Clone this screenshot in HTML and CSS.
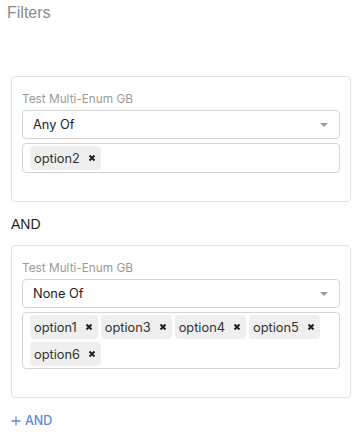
FILE: index.html
```html
<!DOCTYPE html>
<html>
<head>
<meta charset="utf-8">
<link rel="stylesheet" href="styles.css">
</head>
<body>
<div class="page">
  <div class="title">Filters</div>

  <div class="card first">
    <div class="label">Test Multi-Enum GB</div>
    <div class="select"><span>Any Of</span><span class="caret"></span></div>
    <div class="tags">
      <span class="tag">option2<svg class="x" viewBox="0 0 8 8"><path d="M1.5 1.5L6.5 6.5M6.5 1.5L1.5 6.5"/></svg></span>
    </div>
  </div>

  <div class="and">AND</div>

  <div class="card">
    <div class="label">Test Multi-Enum GB</div>
    <div class="select"><span>None Of</span><span class="caret"></span></div>
    <div class="tags">
      <span class="tag">option1<svg class="x" viewBox="0 0 8 8"><path d="M1.5 1.5L6.5 6.5M6.5 1.5L1.5 6.5"/></svg></span>
      <span class="tag">option3<svg class="x" viewBox="0 0 8 8"><path d="M1.5 1.5L6.5 6.5M6.5 1.5L1.5 6.5"/></svg></span>
      <span class="tag">option4<svg class="x" viewBox="0 0 8 8"><path d="M1.5 1.5L6.5 6.5M6.5 1.5L1.5 6.5"/></svg></span>
      <span class="tag">option5<svg class="x" viewBox="0 0 8 8"><path d="M1.5 1.5L6.5 6.5M6.5 1.5L1.5 6.5"/></svg></span>
      <span class="tag">option6<svg class="x" viewBox="0 0 8 8"><path d="M1.5 1.5L6.5 6.5M6.5 1.5L1.5 6.5"/></svg></span>
    </div>
  </div>

  <div class="add"><svg class="plus" viewBox="0 0 10 10"><path d="M5 0.5V9.5M0.5 5H9.5"/></svg>AND</div>
</div>
</body>
</html>
```

FILE: styles.css
```css
* { box-sizing: border-box; }
body {
  margin: 0;
  background: #fff;
  font-family: Inter, "Noto Sans", sans-serif;
}
.page {
  padding: 3px 10px 0 11px;
}
.title {
  margin-left: -4px;
  font-family: "Liberation Sans", Arial, sans-serif;
  font-size: 16px;
  line-height: 20px;
  color: #8a8a8a;
}
.card {
  border: 1px solid #e2e2e2;
  border-radius: 4px;
  padding: 14px 10px 28px 10px;
}
.card.first {
  margin-top: 53px;
}
.label {
  font-size: 11.8px;
  line-height: 16px;
  color: #9a9a9a;
  margin-bottom: 3px;
}
.select {
  height: 29px;
  border: 1px solid #d4d4d4;
  border-radius: 4px;
  padding: 0 10px 0 10px;
  display: flex;
  align-items: center;
  justify-content: space-between;
  font-size: 12.8px;
  color: #222;
  margin-bottom: 4px;
}
.caret {
  width: 0;
  height: 0;
  border-left: 4px solid transparent;
  border-right: 4px solid transparent;
  border-top: 4px solid #9c9c9c;
  margin-right: 1px;
}
.tags {
  min-height: 29px;
  border: 1px solid #d4d4d4;
  border-radius: 4px;
  padding: 2px 7px;
  display: flex;
  flex-wrap: wrap;
  gap: 3px;
}
.tag {
  height: 24px;
  background: #efefef;
  border-radius: 4px;
  padding: 0 5px 0 4px;
  display: inline-flex;
  align-items: center;
  font-size: 12.8px;
  color: #333;
}
.x {
  width: 8px;
  height: 8px;
  margin-left: 8px;
  stroke: #222;
  stroke-width: 2;
  fill: none;
}
.and {
  margin: 12px 0 11px 0;
  font-family: "Liberation Sans", Arial, sans-serif;
  font-size: 14px;
  line-height: 20px;
  color: #222;
}
.add {
  margin-top: 13px;
  display: flex;
  align-items: center;
  font-size: 12.5px;
  line-height: 20px;
  font-weight: 500;
  color: #5b8bd6;
}
.plus {
  width: 10px;
  height: 10px;
  stroke: #5b8bd6;
  stroke-width: 1.3;
  fill: none;
  margin-right: 4px;
}
```
